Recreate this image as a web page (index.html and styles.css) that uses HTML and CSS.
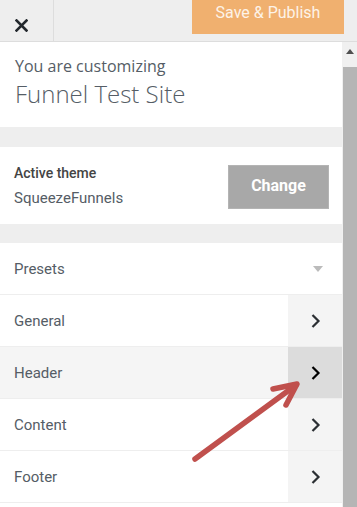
FILE: index.html
```html
<!DOCTYPE html>
<html>
<head>
<meta charset="utf-8">
<link rel="stylesheet" href="styles.css">
</head>
<body>
<div class="topbar">
  <div class="close">
    <svg width="13" height="13" viewBox="0 0 13 13"><path d="M1.5 1.5 L11.5 11.5 M11.5 1.5 L1.5 11.5" stroke="#23282d" stroke-width="2.6" stroke-linecap="square"/></svg>
  </div>
  <div class="save">Save &amp; Publish</div>
</div>
<div class="main">
  <div class="panel">
    <div class="info">
      <div class="info-label">You are customizing</div>
      <div class="info-title">Funnel Test Site</div>
    </div>
    <div class="band"></div>
    <div class="theme">
      <div class="theme-text">
        <div class="theme-label">Active theme</div>
        <div class="theme-name">SqueezeFunnels</div>
      </div>
      <div class="change">Change</div>
    </div>
    <div class="band band2"></div>
    <div class="row presets">
      <div class="label">Presets</div>
      <div class="tri"></div>
    </div>
    <div class="row">
      <div class="label">General</div>
      <div class="go"><svg width="11" height="16" viewBox="0 0 11 16"><path d="M2.5 2 L8.5 8 L2.5 14" fill="none" stroke="#2b2f33" stroke-width="2.2"/></svg></div>
    </div>
    <div class="row active">
      <div class="label">Header</div>
      <div class="go"><svg width="11" height="16" viewBox="0 0 11 16"><path d="M2.5 2 L8.5 8 L2.5 14" fill="none" stroke="#000" stroke-width="2.2"/></svg></div>
    </div>
    <div class="row">
      <div class="label">Content</div>
      <div class="go"><svg width="11" height="16" viewBox="0 0 11 16"><path d="M2.5 2 L8.5 8 L2.5 14" fill="none" stroke="#2b2f33" stroke-width="2.2"/></svg></div>
    </div>
    <div class="row">
      <div class="label">Footer</div>
      <div class="go"><svg width="11" height="16" viewBox="0 0 11 16"><path d="M2.5 2 L8.5 8 L2.5 14" fill="none" stroke="#2b2f33" stroke-width="2.2"/></svg></div>
    </div>
  </div>
  <div class="scrollbar">
    <div class="sb-arrow"></div>
    <div class="sb-thumb"></div>
  </div>
</div>
<svg class="pointer" width="357" height="507" viewBox="0 0 357 507">
  <g stroke="#c0504d" stroke-width="5.5" stroke-linecap="round" stroke-linejoin="round" fill="none">
    <path d="M195 459 L296 385"/>
    <path d="M273 389 L297 384 L286 405"/>
  </g>
</svg>
</body>
</html>
```
FILE: styles.css
```css
html, body {
  margin: 0;
  padding: 0;
}
body {
  width: 357px;
  height: 507px;
  overflow: hidden;
  background: #fff;
  font-family: Roboto, "Liberation Sans", sans-serif;
  position: relative;
}
.topbar {
  height: 41px;
  background: #eeeeee;
  border-bottom: 1px solid #dddddd;
  display: flex;
  align-items: flex-start;
}
.close {
  width: 54px;
  height: 41px;
  border-right: 1px solid #dddddd;
  box-sizing: border-box;
  display: flex;
  justify-content: center;
  align-items: flex-end;
  padding-bottom: 9px;
  padding-right: 10px;
}
.save {
  margin-left: auto;
  margin-right: 13px;
  width: 152px;
  height: 34px;
  background: #f0b06f;
  color: #fdf3e8;
  font-size: 16px;
  line-height: 26px;
  text-align: center;
}
.main {
  display: flex;
  height: 465px;
}
.panel {
  width: 342px;
  flex: none;
  background: #fff;
}
.info {
  height: 85px;
  box-sizing: border-box;
  padding: 14px 0 0 15px;
  color: #555d66;
  font-family: "Open Sans", sans-serif;
}
.info-label {
  font-size: 16px;
  line-height: 20px;
}
.info-title {
  font-size: 24px;
  font-weight: 300;
  line-height: 30px;
  margin-top: 3px;
  color: #555d66;
}
.band {
  height: 20px;
  background: #eeeeee;
}
.band2 {
  height: 19px;
}
.theme {
  height: 77px;
  display: flex;
  align-items: center;
  padding: 0 13px 0 14px;
}
.theme-text {
  flex: 1;
}
.theme-label {
  font-size: 14px;
  font-weight: 500;
  color: #444;
  line-height: 20px;
}
.theme-name {
  font-size: 15px;
  color: #555d66;
  line-height: 20px;
  margin-top: 5px;
}
.change {
  width: 101px;
  height: 44px;
  box-sizing: border-box;
  background: #a8a8a8;
  border: 1px solid #b4b4b4;
  color: #fff;
  font-weight: 700;
  font-size: 16px;
  line-height: 40px;
  text-align: center;
  margin-top: 2px;
}
.row {
  height: 52px;
  box-sizing: border-box;
  border-bottom: 1px solid #eeeeee;
  display: flex;
  align-items: stretch;
}
.row .label {
  flex: 1;
  padding-left: 14px;
  font-size: 15px;
  color: #555d66;
  display: flex;
  align-items: center;
}
.go {
  width: 54px;
  background: #f4f4f4;
  display: flex;
  align-items: center;
  justify-content: center;
}
.row.active {
  background: #f5f5f5;
}
.row.active .go {
  background: #dcdcdc;
}
.presets .tri {
  width: 0;
  height: 0;
  border-left: 5px solid transparent;
  border-right: 5px solid transparent;
  border-top: 6px solid #bbbbbb;
  align-self: center;
  margin-right: 19px;
}
.scrollbar {
  width: 15px;
  background: #f0f0f0;
  display: flex;
  flex-direction: column;
  align-items: flex-end;
}
.sb-arrow {
  width: 0;
  height: 0;
  border-left: 4px solid transparent;
  border-right: 4px solid transparent;
  border-bottom: 5px solid #505050;
  margin: 7px 3px 0 0;
}
.sb-thumb {
  width: 14px;
  flex: 1;
  margin-top: 13px;
  background: #b5b5b5;
}
.pointer {
  position: absolute;
  left: 0;
  top: 0;
}
```
